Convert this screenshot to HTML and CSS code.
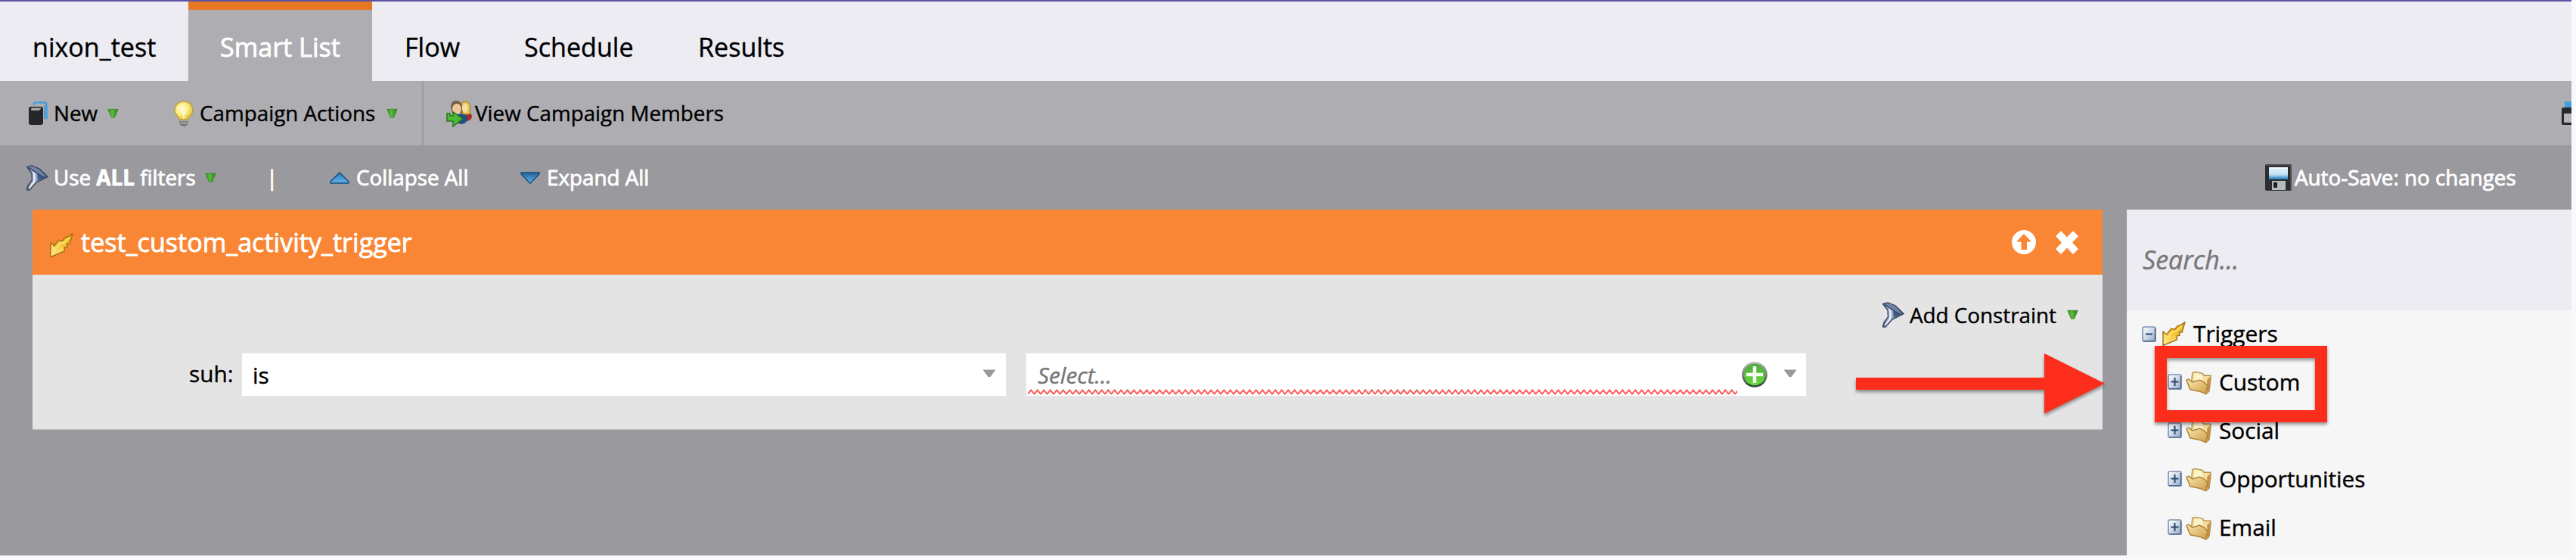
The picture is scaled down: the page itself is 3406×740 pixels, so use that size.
FILE: index.html
```
<!DOCTYPE html>
<html lang="en">
<head>
<meta charset="utf-8">
<title>Smart List</title>
<link rel="stylesheet" href="styles.css">
</head>
<body>
<svg class="defs" width="0" height="0" aria-hidden="true">
  <defs>
    <linearGradient id="gGreen" x1="0" y1="0" x2="1" y2="0"><stop offset="0" stop-color="#2f7d1d"/><stop offset=".4" stop-color="#5cc03f"/><stop offset="1" stop-color="#2a7a18"/></linearGradient>
    <linearGradient id="gBlueUp" x1="0" y1="0" x2="0" y2="1"><stop offset="0" stop-color="#2a79b8"/><stop offset="1" stop-color="#62b4f0"/></linearGradient>
    <linearGradient id="gBlueDown" x1="0" y1="0" x2="0" y2="1"><stop offset="0" stop-color="#245f92"/><stop offset="1" stop-color="#5fb8f8"/></linearGradient>
    <linearGradient id="gFunnel" x1="0" y1="0" x2="1" y2="0"><stop offset="0" stop-color="#4f6080"/><stop offset=".35" stop-color="#cfd9e8"/><stop offset=".55" stop-color="#7386a8"/><stop offset="1" stop-color="#2b3d66"/></linearGradient>
    <linearGradient id="gBolt" x1="1" y1="0" x2="0" y2="1"><stop offset="0" stop-color="#e8a818"/><stop offset=".55" stop-color="#f5c636"/><stop offset="1" stop-color="#fff3a0"/></linearGradient>
    <radialGradient id="gBulb" cx=".4" cy=".4" r=".6"><stop offset="0" stop-color="#fffde0"/><stop offset=".6" stop-color="#f9ea78"/><stop offset="1" stop-color="#e3c33c"/></radialGradient>
    <linearGradient id="gFolder" x1="0" y1="0" x2="1" y2="1"><stop offset="0" stop-color="#fbe9ae"/><stop offset="1" stop-color="#cd9c47"/></linearGradient>
    <linearGradient id="gNode" x1="0" y1="0" x2="1" y2="1"><stop offset="0" stop-color="#ffffff"/><stop offset=".5" stop-color="#cfdaea"/><stop offset="1" stop-color="#8ea6c8"/></linearGradient>
    <linearGradient id="gPlus" x1="0" y1="0" x2="0" y2="1"><stop offset="0" stop-color="#52a63c"/><stop offset="1" stop-color="#63dd3a"/></linearGradient>
    <linearGradient id="gRing" x1="0" y1="0" x2="0" y2="1"><stop offset="0" stop-color="#b4b6b8"/><stop offset="1" stop-color="#32463c"/></linearGradient>
    <linearGradient id="gLabel" x1="0" y1="0" x2="0" y2="1"><stop offset="0" stop-color="#f4fbff"/><stop offset=".6" stop-color="#c3e2f8"/><stop offset="1" stop-color="#1b78bd"/></linearGradient>
    <pattern id="zigzag" width="8.5" height="8" patternUnits="userSpaceOnUse"><path d="M-.2 7 4.25 1.5 8.7 7" fill="none" stroke="#fb4a4a" stroke-width="1.900"/></pattern>
    <symbol id="tri" viewBox="0 0 16 14"><path d="M1 1H15L10.200 12.500H5.800Z" fill="url(#gGreen)" stroke="#3a8a28" stroke-width="1"/></symbol>
    <symbol id="funnel" viewBox="0 0 30 34"><path d="M1.500 2.500 8 1 18 5 29 15.500 22 19 14 23 5 33H1.500L3 27 8.500 20 8 11Z" fill="url(#gFunnel)" stroke="#3c4a66" stroke-width="1.500" stroke-linejoin="round"/><path d="M3.500 3 8 2 17.500 6 27 15.500 20 15 12 9Z" fill="#6f82a4"/><path d="M4 3.500 12 9 24 16.500" fill="none" stroke="#2d3c5c" stroke-width="1.300"/><path d="M10 10 11.500 14 11 22 4.500 31" fill="none" stroke="#e6edf6" stroke-width="2"/><path d="M15 12 16 20 25 16.500Z" fill="#3a5080" opacity=".8"/></symbol>
    <symbol id="bolt" viewBox="0 0 32 34"><path d="M31 1 27 15 23 15 24 19 20 20 20 25 1 33 1 14 6 18 12 10 17 11 21 6 24 6Z" fill="url(#gBolt)" stroke="#a4721a" stroke-width="1.500" stroke-linejoin="round"/><path d="M27 6 19 14 15 14 7 23" fill="none" stroke="#fde57a" stroke-width="1.800"/><path d="M15 20 17 24 4 30" fill="none" stroke="#f9df72" stroke-width="1.500"/></symbol>
    <symbol id="folder" viewBox="0 0 35 32"><path d="M8 14 9 2 13 1 23 3 25 6 34 6 34 10 32 27 28 31Z" fill="#f5dda0" stroke="#b3924e" stroke-width="1.400" stroke-linejoin="round"/><path d="M12 3 22 4 24 12 11 13Z" fill="#fdf3c8"/><path d="M29 12 34 7 32 27 29 31Z" fill="#c2944a"/><path d="M1 12 4 11 9 15 19 12 25 15 30 20 27 31 20 28 6 25Z" fill="url(#gFolder)" stroke="#ad8036" stroke-width="1.500" stroke-linejoin="round"/></symbol>
    <symbol id="node" viewBox="0 0 19 21"><rect x="1" y="1" width="17" height="19" rx="2" fill="url(#gNode)" stroke="#7d92b2" stroke-width="1.600"/><path d="M2 19.800H17.500V3" fill="none" stroke="#50658a" stroke-width="1.600"/></symbol>
    <symbol id="down" viewBox="0 0 18 11"><path d="M.5.5H17.500L10.500 10H7.500Z" fill="#999"/></symbol>
  </defs>
</svg>

<main class="app">
  <nav class="tabs">
    <span class="tab tab-name">nixon_test</span>
    <span class="tab tab-active">Smart List</span>
    <span class="tab tab-flow">Flow</span>
    <span class="tab tab-schedule">Schedule</span>
    <span class="tab tab-results">Results</span>
  </nav>

  <div class="toolbar">
    <div class="tool tool-new">
      <svg class="i-new" viewBox="0 0 25 32"><path d="M7 5V2.500Q7 1.500 8 1.500H21Q23.500 1.500 23.500 4V22H20" fill="none" stroke="#4ba0d8" stroke-width="2.500"/><path d="M20 6 23 3V23H20Z" fill="#4ba0d8"/><path d="M0 10Q0 7 3 7H16Q19 7 19 10V28Q19 31 16 31H3Q0 31 0 28Z" fill="#262628"/><path d="M3 11V10Q3 8.500 5 8.500H17L14 12H5Q3 12 3 11Z" fill="#a7a7ab"/></svg>
      <span class="t-new">New</span><svg class="tri"><use href="#tri"/></svg>
    </div>
    <div class="tool tool-actions">
      <svg class="i-bulb" viewBox="0 0 26 34"><path d="M7.500 22H18.500V29Q18 34 13 34T7.500 29Z" fill="#77787a"/><path d="M8 26H18M9 29.500H17" stroke="#bfc0c2" stroke-width="1.500"/><path d="M13 1C5 1 1 7 1 13S6 20 7.500 25H18.500C20 20 25 19 25 13S21 1 13 1Z" fill="url(#gBulb)" stroke="#bf9e38" stroke-width="1.300"/><path d="M10 14 13 18 16 14M13 18V24" fill="none" stroke="#fffef0" stroke-width="1.500"/></svg>
      <span class="t-actions">Campaign Actions</span><svg class="tri"><use href="#tri"/></svg>
    </div>
    <div class="tool tool-members">
      <svg class="i-members" viewBox="0 0 34 34"><ellipse cx="27" cy="21" rx="7" ry="6" fill="#a52c2a"/><ellipse cx="20" cy="24" rx="8" ry="7" fill="#1f4f86"/><path d="M20 6Q21 0 26 1T32 8L31 18H22Z" fill="#e3c04b" stroke="#9a7c2c"/><ellipse cx="25" cy="10" rx="4" ry="6" fill="#f7dda0"/><path d="M6 9Q6 0 13 0T21 8V16H8Z" fill="#765f43"/><ellipse cx="14" cy="11" rx="6" ry="7" fill="#edc79a"/><path d="M1 17V27H9V34L22 24 9 15V20H5V17Z" fill="#4cb833" stroke="#24751a" stroke-width="1.500"/></svg>
      <span class="t-members">View Campaign Members</span>
    </div>
    <svg class="i-window" viewBox="0 0 13 31"><path d="M4 0H13V8H4Z" fill="#439fdb"/><path d="M0 10Q0 8 2 8H13V31H2Q0 31 0 29Z" fill="#29292b"/><path d="M3 16H13V28H3Z" fill="#b6b5ba"/></svg>
  </div>

  <div class="filterbar">
    <svg class="i-funnel"><use href="#funnel"/></svg>
    <span class="t-use">Use <b>ALL</b> filters</span><svg class="tri"><use href="#tri"/></svg>
    <span class="t-bar">|</span>
    <svg class="i-blue" viewBox="0 0 26 16"><path d="M13 1 25 13V15H1V13Z" fill="url(#gBlueUp)" stroke="#164f7d" stroke-width="1.500" stroke-linejoin="round"/></svg>
    <span class="t-collapse">Collapse All</span>
    <svg class="i-blue" viewBox="0 0 26 16"><path d="M1 1H25V3L13 15.200 1 3Z" fill="url(#gBlueDown)" stroke="#164f7d" stroke-width="1.500" stroke-linejoin="round"/></svg>
    <span class="t-expand">Expand All</span>
    <svg class="i-save" viewBox="0 0 35 35"><rect width="35" height="35" rx="2" fill="#2c2d2f"/><path d="M1 1H34V34" fill="none" stroke="#55575a" stroke-width="1.500"/><rect x="5" y="4" width="25" height="16" fill="url(#gLabel)"/><path d="M6 8H29M6 12H29" stroke="#c7ddec"/><rect x="9" y="22" width="18" height="12" fill="#b7babd"/><rect x="11" y="24" width="5" height="7" fill="#1c1c1e"/></svg>
    <span class="t-save">Auto-Save: no changes</span>
  </div>

  <div class="work">
    <section class="card">
      <header class="card-head">
        <svg class="i-bolt"><use href="#bolt"/></svg>
        <span class="t-title">test_custom_activity_trigger</span>
        <svg class="i-up" viewBox="0 0 32 32"><circle cx="16" cy="16" r="16" fill="#fff"/><path d="M16 5 26 15.500H20V26H12.500V15.500H6Z" fill="#f98634"/></svg>
        <svg class="i-close" viewBox="0 0 30 31"><path d="M7 0 15 8.500 23 0 30 7 22 15.500 30 24 23 31 15 22.500 7 31 0 24 8 15.500 0 7Z" fill="#fff"/></svg>
      </header>
      <div class="constraint">
        <svg class="i-funnel"><use href="#funnel"/></svg>
        <span class="t-add">Add Constraint</span><svg class="tri"><use href="#tri"/></svg>
      </div>
      <div class="field-row">
        <span class="t-suh">suh:</span>
        <div class="select select-op"><span class="t-is">is</span><svg class="down"><use href="#down"/></svg></div>
        <div class="select select-val">
          <div class="value"><span class="t-select">Select...</span><svg class="squiggle"><rect width="938" height="8" fill="url(#zigzag)"/></svg></div>
          <svg class="i-plus" viewBox="0 0 34 34"><circle cx="17" cy="17" r="15.500" fill="url(#gPlus)" stroke="url(#gRing)" stroke-width="2.600"/><path d="M17 6V28M6 17H28" stroke="#f6fdf4" stroke-width="4.600"/></svg>
          <svg class="down"><use href="#down"/></svg>
        </div>
      </div>
    </section>

    <aside class="side">
      <div class="search"><span class="t-search">Search...</span></div>
      <div class="tree">
        <div class="node root"><svg class="i-node"><use href="#node"/><path d="M5 10.500H14" stroke="#2a4468" stroke-width="2"/></svg><svg class="i-bolt"><use href="#bolt"/></svg><span class="t-triggers">Triggers</span></div>
        <div class="node"><svg class="i-node"><use href="#node"/><path d="M4.500 10.500H14.500M9.500 5V16" stroke="#2a4468" stroke-width="2"/></svg><svg class="i-folder"><use href="#folder"/></svg><span>Custom</span></div>
        <div class="node"><svg class="i-node"><use href="#node"/><path d="M4.500 10.500H14.500M9.500 5V16" stroke="#2a4468" stroke-width="2"/></svg><svg class="i-folder"><use href="#folder"/></svg><span>Social</span></div>
        <div class="node"><svg class="i-node"><use href="#node"/><path d="M4.500 10.500H14.500M9.500 5V16" stroke="#2a4468" stroke-width="2"/></svg><svg class="i-folder"><use href="#folder"/></svg><span>Opportunities</span></div>
        <div class="node"><svg class="i-node"><use href="#node"/><path d="M4.500 10.500H14.500M9.500 5V16" stroke="#2a4468" stroke-width="2"/></svg><svg class="i-folder"><use href="#folder"/></svg><span>Email</span></div>
      </div>
    </aside>
  </div>

  <svg class="arrow" viewBox="0 0 330 80"><path d="M0 32H249V0L329 39.700 249 79.500V48H0Z" fill="#fd2d1c"/></svg>
  <div class="callout"></div>
</main>
</body>
</html>
```
FILE: styles.css
```
* { box-sizing: border-box; }
body { margin: 0; width: 3406px; height: 740px; overflow: hidden; background: #f9f9fc; font-family: "Open Sans", "Noto Sans", sans-serif; color: #000; }
svg { display: block; flex: none; overflow: visible; }
span { flex: none; white-space: nowrap; -webkit-text-stroke: .4px currentColor; }
.defs { position: absolute; }
.app { position: relative; width: 3400px; height: 734px; overflow: hidden; background: #9a999e; }

.tabs { display: flex; height: 107px; border-top: 2px solid #5b52a3; background: #edecf2; font-size: 34.1px; line-height: 96px; }
.tab { padding-top: 12px; }
.tab-name { width: 249px; padding-left: 43px; }
.tab-active { width: 243px; padding: 1px 0 0 42px; border-top: 11px solid #e87722; background: #aeadb2; color: #fff; -webkit-text-stroke-width: .8px; }
.tab-flow { width: 200px; padding-left: 43px; }
.tab-schedule { width: 230px; padding-left: 1px; }
.tab-results { width: 200px; padding-left: 1px; }

.toolbar { display: flex; height: 85px; align-items: center; background: #aeadb2; font-size: 27.8px; line-height: 40px; }
.toolbar span { margin-top: -1px; }
.tool { display: flex; align-items: center; height: 85px; }
.tri { width: 15px; height: 14px; }
.tool-new { width: 190px; padding-left: 38px; }
.i-new { width: 25px; height: 32px; margin-right: 8px; }
.t-new { width: 71px; }
.tool-actions { width: 370px; padding-left: 40px; border-right: 2px solid #9c9ba0; }
.i-bulb { width: 26px; height: 34px; margin-right: 8px; }
.t-actions { width: 247px; }
.tool-members { padding-left: 30px; }
.i-members { width: 34px; height: 34px; margin-right: 4px; }
.i-window { width: 13px; height: 31px; margin-left: auto; }

.filterbar { display: flex; height: 85px; align-items: center; padding-left: 34px; color: #fff; font-size: 27.8px; line-height: 40px; }
.filterbar span { margin-top: -1px; -webkit-text-stroke-width: .8px; }
.i-funnel { width: 30px; height: 34px; }
.t-use { width: 200px; margin-left: 7px; }
.t-bar { width: 84px; margin-left: 66px; }
.i-blue { width: 26px; height: 16px; }
.t-collapse { width: 217px; margin-left: 9px; }
.t-expand { width: 150px; margin-left: 9px; }
.i-save { width: 35px; height: 35px; margin-left: auto; }
.t-save { width: 366px; margin-left: 4px; }

.work { display: flex; height: 457px; padding-left: 43px; gap: 32px; }
.card { width: 2737px; height: 291px; background: #e4e4e4; border-bottom: 1px solid #c0c0c2; }
.card-head { display: flex; align-items: center; height: 86px; padding: 0 32px 0 23px; background: #f98634; color: #fff; }
.i-bolt { width: 31px; height: 34px; }
.card-head .i-bolt { margin-top: 7px; }
.t-title { margin-left: 10px; font-size: 34.1px; line-height: 48px; -webkit-text-stroke-width: .8px; }
.i-up { width: 32px; height: 32px; margin-left: auto; }
.i-close { width: 30px; height: 31px; margin-left: 26px; }
.constraint { display: flex; align-items: center; justify-content: flex-end; height: 104px; padding: 2px 32px 0 0; font-size: 27.8px; line-height: 40px; }
.constraint .i-funnel { margin-right: 7px; }
.t-add { width: 208px; }
.field-row { display: flex; font-size: 29.8px; line-height: 54px; }
.t-suh { width: 277px; padding-left: 207px; }
.select { display: flex; height: 56px; background: #fff; line-height: 58px; }
.select-op { width: 1010px; padding: 0 13px 0 14px; justify-content: space-between; }
.down { width: 18px; height: 11px; margin-top: 21px; }
.select-val { width: 1031px; margin-left: 27px; padding-left: 2px; }
.value { width: 944px; height: 56px; }
.t-select { display: block; height: 47px; padding-left: 13px; font-style: italic; color: #777; }
.squiggle { width: 938px; height: 8px; }
.i-plus { width: 34px; height: 34px; margin-top: 11px; }
.select-val .down { margin-left: 21px; }

.side { width: 588px; background: #f6f6f6; }
.search { height: 133px; padding: 42px 0 0 21px; background: #edecf2; font-size: 34px; line-height: 48px; font-style: italic; color: #777; }
.tree { font-size: 29.8px; line-height: 42px; }
.node { display: flex; align-items: center; height: 64px; padding: 1px 0 0 54px; }
.node.root { height: 62px; padding: 0 0 0 20px; }
.i-node { width: 19px; height: 21px; }
.i-folder { width: 34px; height: 32px; margin: 2px 10px 0 5px; }
.root .i-bolt { margin: 0 10px 0 8px; }

.arrow { position: absolute; left: 2454px; top: 467px; width: 330px; height: 80px; filter: drop-shadow(0 3px 2px rgba(0,0,0,.4)); }
.callout { position: absolute; left: 2849px; top: 457px; width: 228px; height: 101px; border: 16px solid #fd2d1c; filter: drop-shadow(0 3px 2px rgba(0,0,0,.4)); }
```
